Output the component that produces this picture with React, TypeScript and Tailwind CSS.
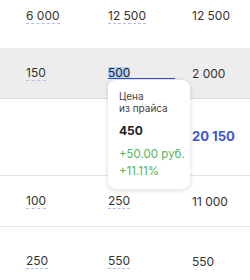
import React from "react";

type Cell = { value: string; dashed?: boolean };

function Num({ value, dashed }: Cell) {
  return (
    <span
      className={
        "text-[12px] leading-[15px] text-[#333333] " +
        (dashed ? "border-b border-dashed border-[#b3bcf2]" : "")
      }
    >
      {value}
    </span>
  );
}

function Row({
  cells,
  className,
  children,
}: {
  cells: React.ReactNode[];
  className: string;
  children?: React.ReactNode;
}) {
  return (
    <div className={"relative grid grid-cols-[82px_84px_1fr] pl-[26px] " + className}>
      {cells.map((c, i) => (
        <div key={i} className="flex">
          {c}
        </div>
      ))}
      {children}
    </div>
  );
}

export default function App() {
  return (
    <div
      className="w-[250px] h-[280px] overflow-hidden bg-white"
      style={{ fontFamily: "Inter, 'Noto Sans', sans-serif" }}
    >
      <Row
        className="h-[48px] items-start pt-[8px]"
        cells={[
          <Num key="a" value="6 000" dashed />,
          <Num key="b" value="12 500" dashed />,
          <Num key="c" value="12 500" />,
        ]}
      />
      <Row
        className="h-[51px] items-center bg-[#ededed] border-b border-[#dadada]"
        cells={[
          <Num key="a" value="150" dashed />,
          <div key="b" className="flex w-[67px] border-b-[1.5px] border-[#3150d8]">
            <span className="text-[12px] leading-[11px] text-[#222] bg-[#b5d3f7]">500</span>
          </div>,
          <Num key="c" value="2 000" />,
        ]}
      >
        <div className="absolute left-[108px] top-[32px] z-10 w-[82px] h-[109px] rounded-[8px] bg-white shadow-[0_1px_5px_rgba(0,0,0,0.16)] pl-[11px] pt-[11px]">
          <div className="text-[10px] leading-[11px] text-[#444]">Цена</div>
          <div className="text-[10px] leading-[11px] text-[#444] mt-[1px]">из прайса</div>
          <div className="text-[12px] leading-[14px] font-bold text-[#222] mt-[10px]">450</div>
          <div className="text-[11.5px] leading-[16px] text-[#52b560] mt-[8px]">+50.00 руб.</div>
          <div className="text-[11.5px] leading-[16px] text-[#52b560] mt-[1px]">+11.11%</div>
        </div>
      </Row>
      <Row
        className="h-[77px] items-center border-b-[1.5px] border-[#e2e2ea]"
        cells={[
          <span key="a" />,
          <span key="b" />,
          <span key="c" className="text-[13px] font-bold text-[#3d55d6]">
            20 150
          </span>,
        ]}
      />
      <Row
        className="h-[51px] items-center border-b-[1.5px] border-[#e2e2ea]"
        cells={[
          <Num key="a" value="100" dashed />,
          <Num key="b" value="250" dashed />,
          <Num key="c" value="11 000" />,
        ]}
      />
      <Row
        className="h-[68px] items-center"
        cells={[
          <Num key="a" value="250" dashed />,
          <Num key="b" value="550" dashed />,
          <Num key="c" value="550" />,
        ]}
      />
    </div>
  );
}
